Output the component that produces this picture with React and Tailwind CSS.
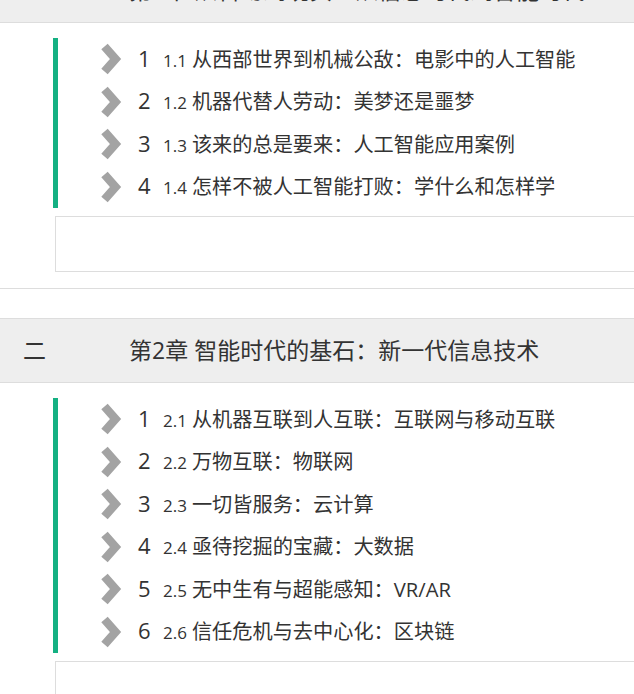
import React from "react";

const chapters = [
  {
    num: "一",
    title: "第1章 从科幻到现实：从信息时代到智能时代",
    items: [
      ["1.1", "从西部世界到机械公敌：电影中的人工智能"],
      ["1.2", "机器代替人劳动：美梦还是噩梦"],
      ["1.3", "该来的总是要来：人工智能应用案例"],
      ["1.4", "怎样不被人工智能打败：学什么和怎样学"],
    ],
  },
  {
    num: "二",
    title: "第2章 智能时代的基石：新一代信息技术",
    items: [
      ["2.1", "从机器互联到人互联：互联网与移动互联"],
      ["2.2", "万物互联：物联网"],
      ["2.3", "一切皆服务：云计算"],
      ["2.4", "亟待挖掘的宝藏：大数据"],
      ["2.5", "无中生有与超能感知：VR/AR"],
      ["2.6", "信任危机与去中心化：区块链"],
    ],
  },
];

const Chevron = () => (
  <svg width="22" height="34" viewBox="0 0 22 34" className="shrink-0">
    <polyline
      points="4.5,4.5 15.5,17 4.5,29.5"
      fill="none"
      stroke="#a3a3a3"
      strokeWidth="8.5"
      strokeLinecap="butt"
      strokeLinejoin="miter"
    />
  </svg>
);

const Chapter = ({ chapter, first }) => (
  <div className={first ? "-mt-[42px]" : "mt-[29px]"}>
    <div className="h-[65px] bg-[#eeeeee] border-y border-[#dddddd] flex items-center text-[23px] text-[#333]">
      <span className="w-[129px] pl-[23px]">{chapter.num}</span>
      <span>{chapter.title}</span>
    </div>

    <div className="mt-[15px] ml-[53px] border-l-[5px] border-[#14b082]">
      {chapter.items.map(([code, text], i) => (
        <div key={code} className="h-[42.5px] flex items-center pl-[42px] text-[#333]">
          <Chevron />
          <div className="ml-[16px] -mt-[2px] flex items-baseline">
            <span className="w-[25px] text-[22px]">{i + 1}</span>
            <span className="text-[17px]">{code}</span>
            <span className="ml-[5px] text-[20.2px]">{text}</span>
          </div>
        </div>
      ))}
    </div>

    <div className="mt-[8px] ml-[55px] h-[56px] border-l border-y border-[#dddddd]" />
    <div className="mt-[16px] border-t border-[#dddddd]" />
  </div>
);

export default function App() {
  return (
    <div
      className="w-full overflow-hidden bg-white"
      style={{ fontFamily: '"Open Sans", "Noto Sans CJK SC", sans-serif' }}
    >
      {chapters.map((c, i) => (
        <Chapter key={c.num} chapter={c} first={i === 0} />
      ))}
    </div>
  );
}
